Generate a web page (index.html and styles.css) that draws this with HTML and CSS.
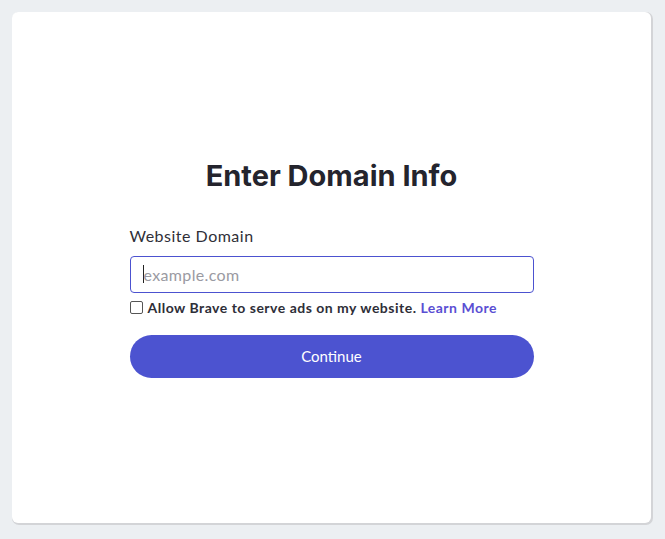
FILE: index.html
```html
<!DOCTYPE html>
<html>
<head>
<meta charset="utf-8">
<link rel="stylesheet" href="styles.css">
</head>
<body>
<div class="card">
  <div class="form">
    <h1 class="title">Enter Domain Info</h1>
    <label class="label" for="domain">Website Domain</label>
    <div class="input"><span class="caret"></span><span class="placeholder">example.com</span></div>
    <div class="check-row">
      <span class="checkbox"></span>
      <span class="check-text">Allow Brave to serve ads on my website. <a class="link">Learn More</a></span>
    </div>
    <button class="btn">Continue</button>
  </div>
</div>
</body>
</html>
```
FILE: styles.css
```css
html, body { margin: 0; padding: 0; }
body {
  background: #eceff2;
  width: 665px;
  height: 539px;
  overflow: hidden;
  font-family: "Lato", "Noto Sans", sans-serif;
}
.card {
  margin: 12px 0 0 12px;
  width: 639px;
  height: 511px;
  background: #fff;
  border-radius: 6px;
  box-shadow: 1px 1px 0 1px #d3d4d7;
  display: flex;
  align-items: center;
  justify-content: center;
}
.form {
  width: 404px;
  display: flex;
  flex-direction: column;
  margin-top: 0;
}
.title {
  margin: 0 0 32px 0;
  text-align: center;
  font-family: "Inter", "Open Sans", sans-serif;
  font-weight: 700;
  font-size: 29px;
  letter-spacing: 0;
  color: #24242d;
  line-height: 36px;
}
.label {
  font-size: 16px;
  letter-spacing: 0.5px;
  color: #2f2f38;
  line-height: 20px;
  margin-bottom: 10px;
}
.input {
  height: 35px;
  border: 1px solid #4c52d0;
  border-radius: 4px;
  display: flex;
  align-items: center;
  padding-left: 12px;
}
.caret {
  width: 1px;
  height: 18px;
  background: #222;
}
.placeholder {
  font-size: 16px;
  letter-spacing: 0.35px;
  color: #9a9aa2;
}
.check-row {
  display: flex;
  align-items: center;
  margin-top: 7px;
  height: 16px;
}
.checkbox {
  width: 11px;
  height: 11px;
  border: 1px solid #555;
  border-radius: 2px;
  margin-right: 5px;
}
.check-text {
  font-size: 14px;
  font-weight: 700;
  letter-spacing: 0.5px;
  color: #2e2e38;
}
.link {
  color: #5a4ed3;
}
.btn {
  margin-top: 19px;
  height: 43px;
  border: none;
  border-radius: 22px;
  background: #4c53d0;
  color: #fff;
  font-family: "Lato", "Noto Sans", sans-serif;
  font-size: 15px;
  padding: 0;
}
```
